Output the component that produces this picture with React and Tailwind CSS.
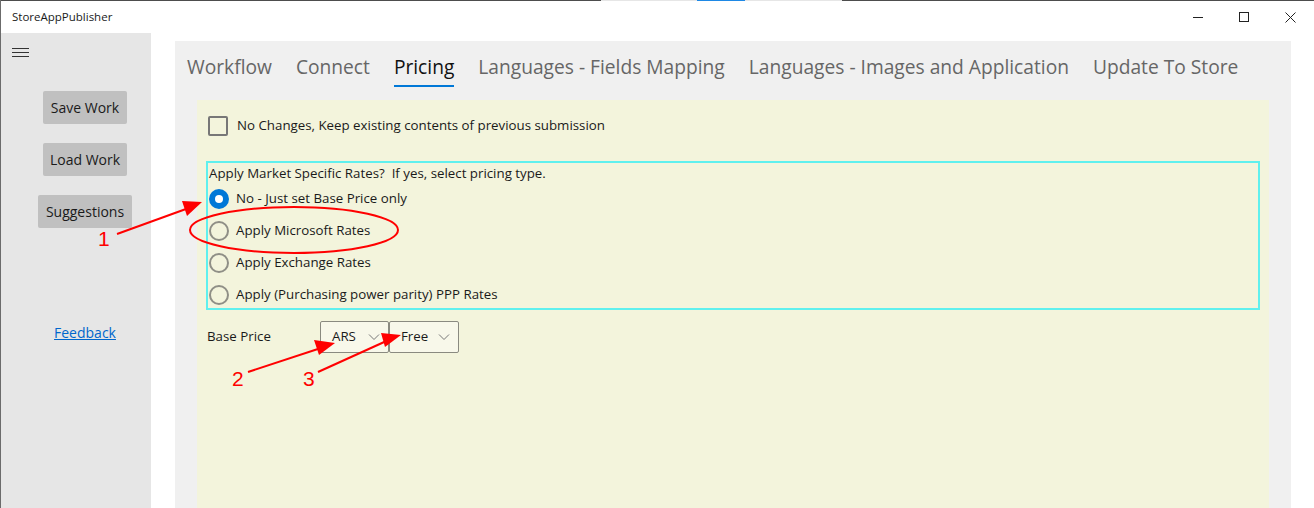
import { useState } from "react";

const tabs = [
  "Workflow",
  "Connect",
  "Pricing",
  "Languages - Fields Mapping",
  "Languages - Images and Application",
  "Update To Store",
];

const rates = [
  "No - Just set Base Price only",
  "Apply Microsoft Rates",
  "Apply Exchange Rates",
  "Apply (Purchasing power parity) PPP Rates",
];

function Radio({ checked }) {
  if (checked) {
    return (
      <span className="w-5 h-5 rounded-full bg-[#0078d7] flex items-center justify-center shrink-0">
        <span className="w-2 h-2 rounded-full bg-white" />
      </span>
    );
  }
  return <span className="w-5 h-5 rounded-full border-2 border-[#8f8f86] shrink-0" />;
}

function Dropdown({ value, width }) {
  return (
    <div className={"h-[32px] flex items-center justify-between pl-[11px] pr-[8px] border border-[#8a8a80] rounded-[2px] bg-[#f8f8ea] text-[#1a1a1a] " + width}>
      <span>{value}</span>
      <svg width="12" height="12" viewBox="0 0 12 12" fill="none" stroke="#777" strokeWidth="1">
        <path d="M1 3.5 L6 8.5 L11 3.5" />
      </svg>
    </div>
  );
}

function Annotations() {
  return (
    <svg className="absolute inset-0 pointer-events-none" width="1314" height="508">
      <g stroke="#ff0000" strokeWidth="2" fill="none">
        <line x1="116" y1="234" x2="196" y2="205" />
        <line x1="247" y1="372" x2="326" y2="346" />
        <line x1="317" y1="372" x2="392" y2="338" />
        <ellipse cx="293" cy="230" rx="104" ry="23" />
      </g>
      <g fill="#ff0000">
        <path d="M181 201 L201 202 L186 216 Z" />
        <path d="M313 340 L334 343 L318 355 Z" />
        <path d="M380 333 L400 335 L384 347 Z" />
      </g>
      <g fill="#ff0000" fontFamily="'Liberation Sans', sans-serif" fontSize="21">
        <text x="97" y="246">1</text>
        <text x="231" y="386">2</text>
        <text x="302" y="386">3</text>
      </g>
    </svg>
  );
}

export default function App() {
  const [selected] = useState(0);

  return (
    <div className="relative w-[1314px] h-[508px] overflow-hidden bg-white font-['Open_Sans',sans-serif] text-[13.3px] border-l border-[#6b6b6b]">
      {/* strip of the taskbar behind the window */}
      <div className="flex h-px">
        <span className="w-[600px] bg-[#4d4d4d]" />
        <span className="w-[96px] bg-[#e6e6e6]" />
        <span className="w-[48px] bg-[#1e88e5]" />
        <span className="w-[97px] bg-[#e6e6e6]" />
        <span className="flex-1 bg-[#4d4d4d]" />
      </div>

      {/* title bar */}
      <div className="h-[32px] flex items-center justify-between">
        <span className="pl-[11px] text-[11.5px] text-[#1a1a1a]">StoreAppPublisher</span>
        <div className="flex items-center h-full pr-[1px]">
          <div className="w-[46px] flex justify-center">
            <span className="w-[10px] h-px bg-[#222]" />
          </div>
          <div className="w-[46px] flex justify-center">
            <span className="w-[10px] h-[10px] border border-[#222]" />
          </div>
          <div className="w-[46px] flex justify-center">
            <svg width="11" height="11" viewBox="0 0 11 11" stroke="#222" strokeWidth="1">
              <path d="M0.5 0.5 L10.5 10.5 M10.5 0.5 L0.5 10.5" />
            </svg>
          </div>
        </div>
      </div>

      <div className="flex h-[475px]">
        {/* sidebar */}
        <div className="w-[150px] bg-[#e6e6e6] flex flex-col">
          <div className="pl-[11px] pt-[15px] flex flex-col gap-[3px]">
            <span className="w-[17px] h-px bg-[#333]" />
            <span className="w-[17px] h-px bg-[#333]" />
            <span className="w-[17px] h-px bg-[#333]" />
          </div>
          <div className="pl-[18px] flex flex-col items-center">
            <div className="mt-[34px] flex flex-col items-center gap-[19px] text-[14px] text-[#1a1a1a]">
              <button className="w-[84px] h-[33px] bg-[#c0c0c0] rounded-[2px]">Save Work</button>
              <button className="w-[84px] h-[33px] bg-[#c0c0c0] rounded-[2px]">Load Work</button>
              <button className="w-[94px] h-[33px] bg-[#c0c0c0] rounded-[2px]">Suggestions</button>
            </div>
            <a className="mt-[94px] text-[14px] text-[#0066cc] underline">Feedback</a>
          </div>
        </div>

        {/* main */}
        <div className="flex-1 pl-[24px] pr-[23px] pt-[8px]">
          <div className="h-full bg-[#f0f0f0] flex flex-col pl-[22px] pr-[22px]">
            <div className="flex h-[59px] items-start pt-[12px] -ml-[22px] whitespace-nowrap">
              {tabs.map((t, i) => (
                <div key={t} className="px-[12px] flex flex-col items-center">
                  <span className={"text-[19.2px] leading-[28px] " + (i === 2 ? "text-[#111]" : "text-[#666]")}>
                    {t}
                  </span>
                  {i === 2 && <span className="mt-[4px] h-[2px] w-full bg-[#0078d7]" />}
                </div>
              ))}
            </div>

            <div className="flex-1 bg-[#f3f4dc] pl-[9px] pr-[9px] pt-[16px] text-[#1a1a1a]">
              <label className="flex items-center gap-[9px] h-[20px] pl-[2px]">
                <span className="w-5 h-5 border-2 border-[#777] rounded-[2px]" />
                <span>No Changes, Keep existing contents of previous submission</span>
              </label>

              <div className="mt-[25px] border-[2px] border-[#5ff0ee] pl-[1px] h-[149px]">
                <div className="leading-[20px]">Apply Market Specific Rates?&nbsp; If yes, select pricing type.</div>
                <div className="flex flex-col">
                  {rates.map((r, i) => (
                    <div key={r} className="h-[32px] flex items-center gap-[7px]">
                      <Radio checked={i === selected} />
                      <span>{r}</span>
                    </div>
                  ))}
                </div>
              </div>

              <div className="mt-[11px] flex items-center">
                <span className="w-[114px] pl-[1px]">Base Price</span>
                <Dropdown value="ARS" width="w-[69px]" />
                <Dropdown value="Free" width="w-[70px]" />
              </div>
            </div>
          </div>
        </div>
      </div>

      <Annotations />
    </div>
  );
}
